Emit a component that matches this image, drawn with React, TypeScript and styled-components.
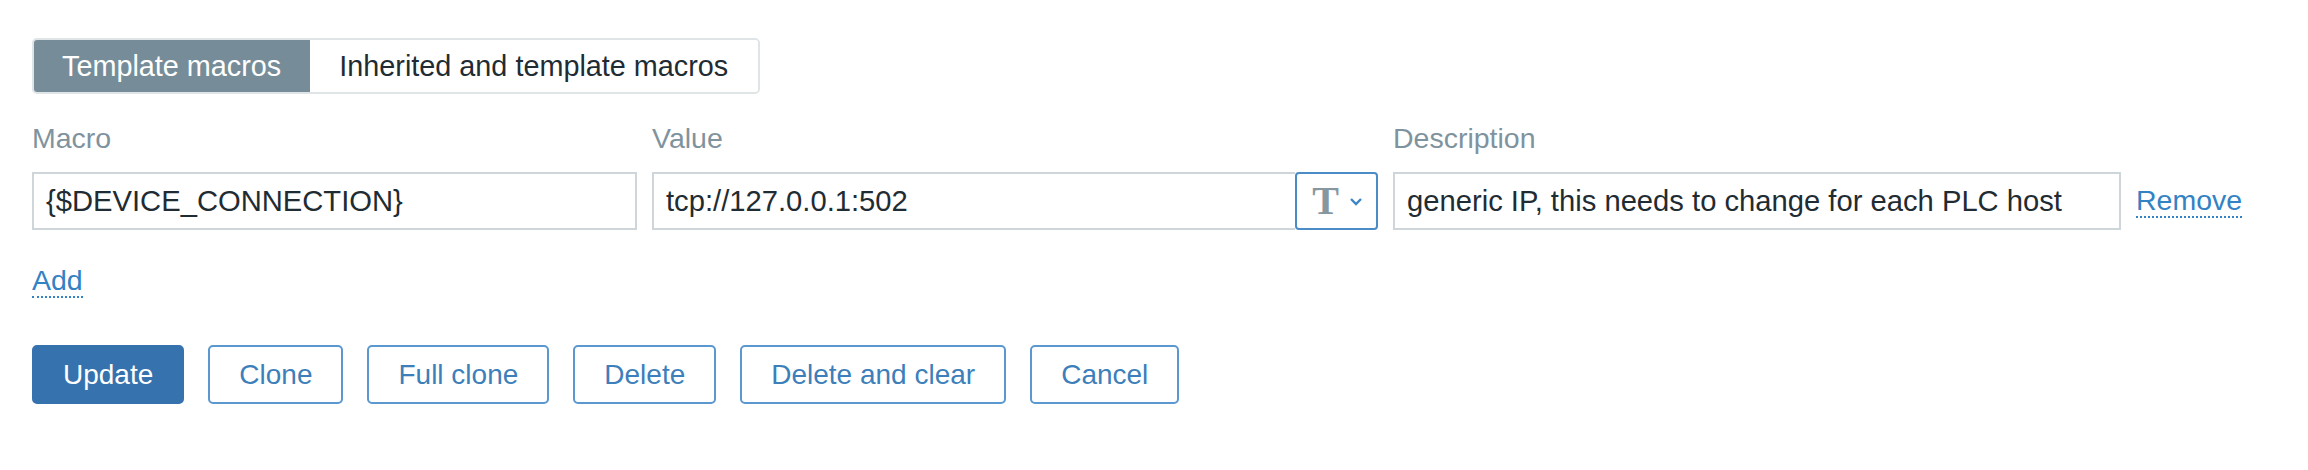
import React from "react";
import styled, { createGlobalStyle } from "styled-components";

const Global = createGlobalStyle`
  html, body { margin: 0; padding: 0; background: #ffffff; }
  body { font-family: "Liberation Sans", Arial, sans-serif; font-size: 29px; color: #1f2c33; }
`;

const Page = styled.div`
  padding: 38px 32px 0 32px;
  height: 432px;
  display: flex;
  flex-direction: column;
`;

const Tabs = styled.div`
  display: inline-flex;
  align-self: flex-start;
  height: 56px;
  border: 2px solid #dfe4e7;
  border-radius: 5px;
  box-sizing: border-box;
  overflow: hidden;
`;

const Tab = styled.div<{ $active?: boolean }>`
  display: flex;
  align-items: center;
  padding: 0 ${(p) => (p.$active ? "29px" : "30px")} 0 ${(p) => (p.$active ? "28px" : "29px")};
  background: ${(p) => (p.$active ? "#768d99" : "#ffffff")};
  color: ${(p) => (p.$active ? "#ffffff" : "#1f2c33")};
  font-size: 28.8px;
`;

const Grid = styled.div`
  display: grid;
  grid-template-columns: 605px 726px 728px auto;
  column-gap: 15px;
  row-gap: 16px;
  margin-top: 26px;
  align-items: center;
`;

const Label = styled.div`
  color: #7f939e;
  font-size: 28.5px;
  height: 36px;
  line-height: 36px;
`;

const Input = styled.div`
  display: flex;
  align-items: center;
  height: 58px;
  box-sizing: border-box;
  border: 2px solid #cfd6da;
  padding-left: 12px;
  background: #fff;
  font-size: 29.2px;
  color: #1f2c33;
  white-space: nowrap;
  overflow: hidden;
`;

const ValueWrap = styled.div`
  display: flex;
  height: 58px;
`;

const ValueInput = styled(Input)`
  flex: 1;
  border-right: none;
`;

const TypeButton = styled.div`
  width: 83px;
  height: 58px;
  box-sizing: border-box;
  border: 2px solid #4c8cc6;
  border-radius: 4px;
  display: flex;
  align-items: center;
  justify-content: center;
  gap: 10px;
  padding-left: 2px;
`;

const TGlyph = styled.span`
  font-family: "Liberation Serif", "Times New Roman", serif;
  font-size: 40px;
  font-weight: bold;
  color: #8797a0;
  line-height: 1;
`;

const Link = styled.span`
  color: #3282c4;
  font-size: 28.5px;
  border-bottom: 2px dotted #3282c4;
  line-height: 30px;
  padding-bottom: 1px;
  justify-self: start;
`;

const AddRow = styled.div`
  margin-top: 35px;
  display: flex;
`;

const Buttons = styled.div`
  display: flex;
  gap: 24px;
  margin-top: 47px;
`;

const Button = styled.div<{ $primary?: boolean }>`
  height: 59px;
  box-sizing: border-box;
  display: flex;
  align-items: center;
  padding: 0 29px;
  border-radius: 5px;
  font-size: 28px;
  border: 2px solid ${(p) => (p.$primary ? "#3572ae" : "#5a98cf")};
  background: ${(p) => (p.$primary ? "#3572ae" : "#ffffff")};
  color: ${(p) => (p.$primary ? "#ffffff" : "#3d7fba")};
`;

export default function App() {
  return (
    <>
      <Global />
      <Page>
        <Tabs>
          <Tab $active>Template macros</Tab>
          <Tab>Inherited and template macros</Tab>
        </Tabs>
        <Grid>
          <Label>Macro</Label>
          <Label>Value</Label>
          <Label>Description</Label>
          <div />
          <Input>{"{$DEVICE_CONNECTION}"}</Input>
          <ValueWrap>
            <ValueInput>tcp://127.0.0.1:502</ValueInput>
            <TypeButton>
              <TGlyph>T</TGlyph>
              <svg width="14" height="9" viewBox="0 0 14 9">
                <path d="M2 2 L7 7 L12 2" fill="none" stroke="#3d86c6" strokeWidth="2.4" />
              </svg>
            </TypeButton>
          </ValueWrap>
          <Input>generic IP, this needs to change for each PLC host</Input>
          <Link>Remove</Link>
        </Grid>
        <AddRow>
          <Link>Add</Link>
        </AddRow>
        <Buttons>
          <Button $primary>Update</Button>
          <Button>Clone</Button>
          <Button>Full clone</Button>
          <Button>Delete</Button>
          <Button>Delete and clear</Button>
          <Button>Cancel</Button>
        </Buttons>
      </Page>
    </>
  );
}
